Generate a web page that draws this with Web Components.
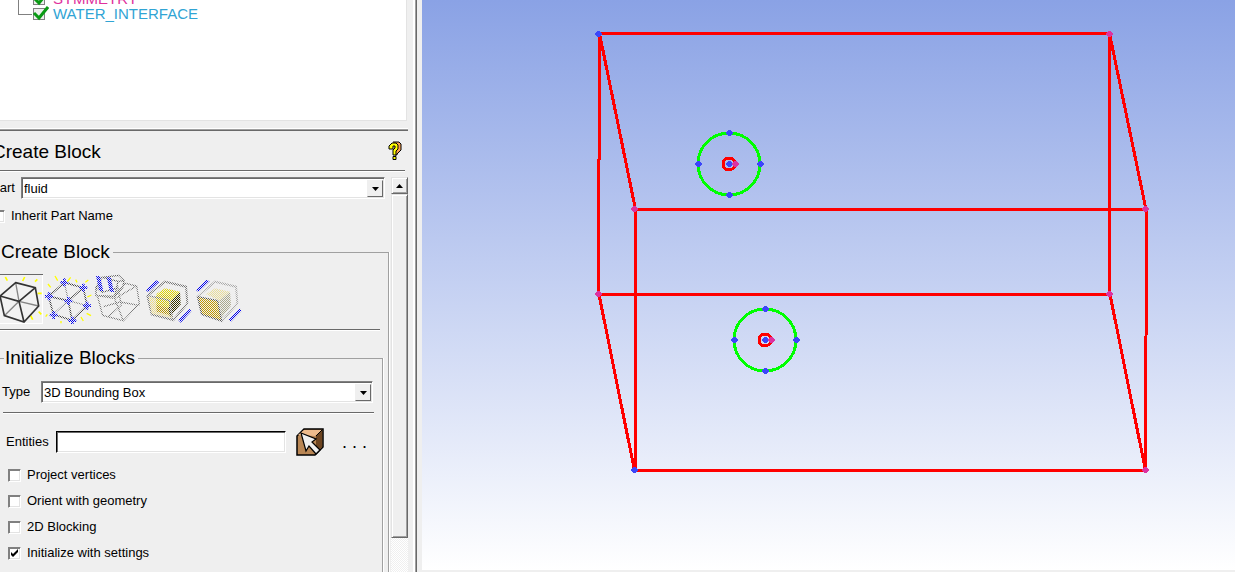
<!DOCTYPE html>
<html lang="en">
<head>
<meta charset="utf-8">
<title>Blocking</title>
<style>
html, body { margin: 0; height: 100%; }
body { background: #efefef; color: #000; font: 13px/16px "Liberation Sans", Arial, sans-serif; overflow: hidden; }
</style>
</head>
<body>
<blocking-app></blocking-app>
<script>
const define = (name, html, setup) => customElements.define(name, class extends HTMLElement {
  constructor() {
    super();
    const t = document.createElement('template');
    t.innerHTML = html;
    this.attachShadow({ mode: 'open' }).append(t.content.cloneNode(true));
  }
  connectedCallback() { if (setup) setup.call(this, this.shadowRoot); }
});

define('tree-item', `
<style>
:host { display: flex; height: 15px; align-items: center; font-size: 15px; line-height: 15px; color: var(--tint); white-space: nowrap; }
.branch { width: 14px; height: 15px; margin-left: 18px; flex: none; border-left: 1px solid #808080; box-sizing: border-box; background: linear-gradient(#808080, #808080) 0 8px / 14px 1px no-repeat; }
:host([last]) .branch { height: 9px; align-self: flex-start; }
label { display: flex; align-items: center; gap: 4px; }
.tick { display: grid; width: 17px; height: 15px; }
.tick > * { grid-area: 1 / 1; }
input { appearance: none; margin: 2px 0 0 1px; width: 12px; height: 12px; box-sizing: border-box; border: 1px solid #808080; background: #efefef; }
svg { pointer-events: none; }
input:not(:checked) + svg { visibility: hidden; }
</style>
<span class="branch"></span>
<label><span class="tick"><input type="checkbox" checked><svg width="17" height="15"><path d="M2 7l5 5 9-11" fill="none" stroke="#0a9a14" stroke-width="3"/></svg></span><slot></slot></label>`);

define('part-tree', `
<style>
:host { display: block; box-sizing: border-box; height: 121px; overflow: hidden; background: #fff; border-right: 1px solid #e3e3e3; border-bottom: 1px solid #e3e3e3; }
.rows { margin-top: -9px; }
</style>
<div class="rows"><slot></slot></div>`);

define('rule-line', `
<style>:host { display: block; height: 1px; background: #696969; border-bottom: 1px solid #fff; }</style>`);

define('help-button', `
<style>
:host { display: block; }
button { display: block; border: 0; padding: 0; background: none; }
svg { display: block; }
</style>
<button type="button" aria-label="Help"><svg width="14" height="20" viewBox="0 0 14 20">
<path d="M5 1h6l2 2v6l-4 4v1H7" fill="#f9a050" stroke="#000"/>
<path d="M2 4l2-2h4l2 2v4L8 10v4H5v-5l2-2V5H5v3H1V5z" fill="#ff0" stroke="#000"/>
<path d="M5 15.500h3v3H5z" fill="#ff0" stroke="#000"/></svg></button>`);

define('drop-down', `
<style>
:host { display: flex; align-items: center; }
label { flex: none; width: var(--label, 30px); }
.box { flex: 1; display: grid; grid-template-columns: 1fr 16px; box-sizing: border-box; height: 22px; border: 1px solid #a0a0a0; border-color: #808080 #fff #fff #808080; box-shadow: inset 1px 1px #696969, inset -1px -1px #e3e3e3; background: #fff; padding: 2px 1px 1px 2px; }
select { grid-area: 1 / 1 / 2 / 3; appearance: none; border: 0; outline: 0; margin: 0; padding: 0; background: none; color: inherit; font: inherit; }
.arrow { grid-area: 1 / 2; pointer-events: none; display: grid; place-items: center; background: #efefef; border: 1px solid; border-color: #efefef #696969 #696969 #efefef; }
</style>
<label for="s"></label>
<span class="box"><select id="s"><option></option></select><span class="arrow"><svg width="7" height="4"><path d="M0 0h7L3.500 4z"/></svg></span></span>`,
function (r) {
  r.querySelector('label').textContent = this.getAttribute('label');
  r.querySelector('option').textContent = this.getAttribute('value');
});

define('check-row', `
<style>
:host { display: block; height: 26px; }
label { display: flex; align-items: center; gap: 6px; height: 26px; white-space: nowrap; }
.tick { display: grid; width: 13px; height: 13px; }
.tick > * { grid-area: 1 / 1; }
input { appearance: none; margin: 0; width: 13px; height: 13px; box-sizing: border-box; background: #fff; border: 1px solid; border-color: #808080 #fff #fff #808080; box-shadow: inset 1px 1px #808080, inset -1px -1px #e3e3e3; }
svg { pointer-events: none; }
input:not(:checked) + svg { visibility: hidden; }
</style>
<label><span class="tick"><input type="checkbox"><svg width="13" height="13"><path d="M3 5v3l2 2 5-5V2L5 7z"/></svg></span><slot></slot></label>`,
function (r) { r.querySelector('input').checked = this.hasAttribute('checked'); });

define('group-box', `
<style>
:host { display: block; }
fieldset { margin: 0; min-width: 0; box-sizing: border-box; border: 1px solid #a0a0a0; box-shadow: 1px 0 #fff; padding: 0 8px 0 12px; min-height: var(--min, 400px); }
legend { padding: 0 3px 0 1px; margin-left: var(--legend, 0px); font-size: 19px; line-height: 24px; }
</style>
<fieldset><legend></legend><slot></slot></fieldset>`,
function (r) { r.querySelector('legend').textContent = this.getAttribute('label'); });

/* Stippled icons: solid shapes under a checkerboard of the panel colour. */
const stipple = x => `<defs><pattern id="s" width="6" height="6" patternUnits="userSpaceOnUse"><path d="M0 0h3v3H0zM3 3h3v3H3z" fill="#efefef"/></pattern></defs><rect x="${x}" y="27" width="150" height="150" fill="url(#s)"/>`;
const art = {
  box: ['Initialize blocks', -21, `<g fill="none"><path d="M22 47l-6-11M68 48l6-12M105 50l7-7M113 85h12M116 140l8 8M92 152l6 12" stroke="#ff0" stroke-width="5"/>
<path d="M57 109L47 53M57 109L13 152M57 109l59 14" stroke="#858585" stroke-width="4"/>
<path d="M47 53l59 15 10 55-44 48-59-19L0 93zM57 109l49-41M57 109L0 93M57 109l15 62" stroke="#333" stroke-width="5"/></g>`, ''],
  vertices: ['From vertices', 132, `<g fill="none"><path d="M193 53l57 15 11 54-45 44-56-18-14-54zM205 107l45-39M205 107l-59-13M205 107l11 59" stroke="#444" stroke-width="5"/><path d="M205 107l-12-54M205 107l-45 41M205 107l56 15" stroke="#888" stroke-width="4"/></g>
<g fill="#00e">${[[193,52],[250,68],[261,122],[217,167],[161,150],[147,94],[205,108]].map(([x,y])=>`<path d="M${x-12} ${y-4}h8v-8h8v8h8v8h-8v8h-8v-8h-8z"/>`).join('')}</g>`,
`<path d="M173 47l-8-14M202 50l10-13M231 52l-4-8M256 52l9-7M144 57l8 10M262 96l12-6M260 145l13 7M243 156l7 12M142 148l-5 7M183 168v7" fill="none" stroke="#ff0" stroke-width="4"/>`],
  extrude: ['Extrude', 282, `<g fill="none" stroke="#555" stroke-width="4"><path d="M288 67l18-30 50-6 16 16-4 20-24 27-56-2zM306 37l48 12 18-2M354 49l-10 45M288 67l18 15 42-12"/><path d="M340 96l36-41 34 8 8 52-48 52-62-16-16-60M292 91l52 10 66-38M344 101l26 66M310 125l50-14 58 10M352 60l12 60-40 36" stroke="#777"/></g>
<path d="M288 33h12l10 45h-12zM320 37h12l10 44h-12z" fill="#00e"/>`, ''],
  scan: ['3D from 2D', 42, `<path d="M52 92l53-42 63 15 4 50-42 50-65-17z" fill="none" stroke="#777" stroke-width="6"/>
<path d="M56 95l65 10 8 55-64-14z" fill="#e8d88c"/><path d="M78 88l27-18 45 10-25 27z" fill="#e0d400"/><path d="M78 90h44v45H80z" fill="#d4c400"/><path d="M80 120l40 10-2 20-38-10z" fill="#b89400"/><path d="M125 105l25-25 2 38-32 38-5-25z" fill="#353000"/>
<path d="M54 92l64 14 10 56" fill="none" stroke="#777" stroke-width="4"/>
<path d="M48 76l30-30 10 5-33 31zM145 165l34-34 5 8-32 34z" fill="#00e"/>`, ''],
  face: ['2D from 3D', 192, `<path d="M203 95l52-45 63 15 4 50-46 53-61-20z" fill="none" stroke="#aaa" stroke-width="6"/>
<path d="M228 88l27-18 45 10-30 28z" fill="#e8dc98"/><path d="M268 108l32-28 3 42-28 36z" fill="#aaa88c"/>
<path d="M203 95l60 12 12 61-60-20z" fill="#c09800" stroke="#555" stroke-width="4"/>
<path d="M198 75l30-31 11 5-34 32zM296 164l33-34 6 7-33 34z" fill="#00e"/>`, '']
};
define('block-tool', `
<style>
:host { display: block; }
button { display: block; box-sizing: border-box; width: 50px; height: 50px; padding: 0; border: 0; background: none; }
:host([active]) button { box-shadow: inset 0 1px #696969, inset -1px -1px #fff; background: #f2f2f2; }
svg { display: block; }
</style><button type="button"></button>`,
function (r) {
  const [name, x, body, over] = art[this.getAttribute('icon')];
  const b = r.querySelector('button');
  b.setAttribute('aria-label', name);
  b.innerHTML = `<svg width="50" height="50" viewBox="${x} 27 150 150">${body}${this.hasAttribute('active') ? '' : stipple(x)}${over}</svg>`;
});

define('entity-picker', `
<style>
:host { display: flex; align-items: center; height: 28px; }
label { width: 50px; flex: none; }
input { flex: 1; min-width: 0; box-sizing: border-box; height: 22px; margin: 0; border: 1px solid; border-color: #000 #fff #fff #000; box-shadow: inset 1px 1px #696969, inset -1px -1px #e3e3e3; outline: 0; background: #fff; font: inherit; padding: 2px; }
button { flex: none; border: 0; padding: 0; background: none; font: inherit; }
.pick { margin-left: 10px; }
.more { width: 50px; height: 28px; padding-left: 18px; text-align: left; font-size: 18px; }
svg { display: block; }
</style>
<label for="e">Entities</label><input id="e" type="text">
<button class="pick" type="button" aria-label="Select entities"><svg width="28" height="28" viewBox="0 0 28 28">
<path d="M1 8l7-7h19v18l-8 8H1z" fill="#b98654" stroke="#000" stroke-width="1.500"/>
<path d="M2 7l6-5h18l-7 6z" fill="#eebb8c"/><path d="M20 8l6-6v17l-6 7z" fill="#6d4420"/><path d="M20 8l6-6" stroke="#000"/>
<path d="M5 5l15 6-4 3 8 8-4 4-7-8-3 5z" fill="#efefef" stroke="#000" stroke-width="1.200"/></svg></button>
<button class="more" type="button" aria-label="More options">. . .</button>`);

define('scroll-bar', `
<style>
:host { display: flex; flex-direction: column; width: 17px; background: repeating-conic-gradient(#fff 0 25%, #efefef 0 50%) 0 0 / 2px 2px; }
button { flex: none; padding: 0; box-sizing: border-box; width: 17px; height: 17px; border: 1px solid; border-color: #e3e3e3 #696969 #696969 #e3e3e3; box-shadow: inset 1px 1px #fff, inset -1px -1px #a0a0a0; background: #efefef; display: grid; place-items: center; }
.thumb { height: 344px; }
</style>
<button type="button" aria-label="Scroll up"><svg width="7" height="4"><path d="M0 4h7L3.500 0z"/></svg></button>
<button class="thumb" type="button" aria-label="Scroll position"></button>`);

define('block-form', `
<style>
:host { display: grid; grid-template-columns: 1fr 17px; column-gap: 2px; overflow: hidden; }
.body { min-width: 0; }
.part { margin: 0 4px 0 -9px; }
.inherit { margin: 4px 0 0 -8px; }
.outer { margin: 11px 0 0 -13px; --min: 500px; }
.tools { display: flex; margin: 10px 0 5px -7px; }
.tools block-tool:first-child { margin-right: 1px; }
.inner { margin: 15px -3px 0 -12px; --legend: 3px; }
.type { margin: 11px 1px 9px 1px; --label: 39px; }
.inner rule-line { margin: 0 0 14px 2px; }
.settings { margin: 0 0 0 5px; }
.checks { margin: 6px 0 0 7px; }
</style>
<div class="body">
  <drop-down class="part" label="Part" value="fluid"></drop-down>
  <check-row class="inherit">Inherit Part Name</check-row>
  <group-box class="outer" label="Create Block">
    <div class="tools"><block-tool icon="box" active></block-tool><block-tool icon="vertices"></block-tool><block-tool icon="extrude"></block-tool><block-tool icon="scan"></block-tool><block-tool icon="face"></block-tool></div>
    <rule-line></rule-line>
    <group-box class="inner" label="Initialize Blocks">
      <drop-down class="type" label="Type" value="3D Bounding Box"></drop-down>
      <rule-line></rule-line>
      <entity-picker class="settings"></entity-picker>
      <div class="checks">
        <check-row>Project vertices</check-row>
        <check-row>Orient with geometry</check-row>
        <check-row>2D Blocking</check-row>
        <check-row checked>Initialize with settings</check-row>
      </div>
    </group-box>
  </group-box>
</div>
<scroll-bar></scroll-bar>`);

define('side-panel', `
<style>
:host { display: flex; flex-direction: column; overflow: hidden; box-sizing: border-box; padding-right: 5px; border-right: 1px solid #696969; box-shadow: inset -1px 0 #a0a0a0, inset -3px 0 #fff; }
part-tree { flex: none; margin-right: 4px; }
.edge { flex: none; height: 2px; margin: 7px 3px 0 0; border-top: 1px solid #fff; background: linear-gradient(#a0a0a0 50%, #696969 50%); }
header { flex: none; display: flex; justify-content: space-between; align-items: center; height: 39px; padding-right: 9px; }
h1 { margin: 3px 0 0 -8px; font: inherit; font-size: 19px; line-height: 24px; }
rule-line { flex: none; margin-right: 6px; }
block-form { flex: 1; min-height: 0; margin: 5px 3px 0 0; }
</style>
<part-tree>
  <tree-item style="--tint:#e0309c">SYMMETRY</tree-item>
  <tree-item last style="--tint:#30a4d4">WATER_INTERFACE</tree-item>
</part-tree>
<div class="edge"></div>
<header><h1>Create Block</h1><help-button></help-button></header>
<rule-line></rule-line>
<block-form></block-form>`);

const dot = (x, y, c) => `<path d="M${x-4} ${y-1}h1v-1h1v-1h3v1h1v1h1v2h-1v1h-1v1h-3v-1h-1v-1h-1z" fill="${c}"/>`;
const port = (x, y) => `<circle cx="${x-1}" cy="${y}" r="31" stroke="#0f0" stroke-width="3"/><circle cx="${x-1}" cy="${y}" r="6" stroke="#f00"/>`
  + [[0,-31],[0,31],[-31,0],[31,0],[0,0]].map(([a,b]) => dot(x+a, y+b, '#3c46fa')).join('') + dot(x+6, y, '#dc32a0');
define('geometry-view', `
<style>
:host { display: block; min-width: 0; min-height: 0; background: linear-gradient(#8aa2e5, #fff); }
svg { display: block; width: 100%; height: 100%; }
</style>
<svg viewBox="422 0 813 570" preserveAspectRatio="xMinYMin meet" role="img" aria-label="Wireframe box with two ports" shape-rendering="crispEdges">
<g fill="none" stroke-width="3">
<path stroke="#f00" d="M599.500 33.500H1109.500V294.500H598.500zM635.500 209.500H1146.500L1145.500 470.500H635.500zM599.500 33.500L635.500 209.500M1109.500 33.500L1146 209.500M599 294.500L634.500 470.500M1110 294.500L1145.500 470.500"/>
${port(730,164)}${port(766,340)}
</g>
${dot(599,34,'#3c46fa')}${dot(635,470,'#3c46fa')}${[[1110,34],[1146,209],[635,209],[599,294],[1110,294],[1146,470]].map(([x,y])=>dot(x,y,'#dc32a0')).join('')}
</svg>`);

define('blocking-app', `
<style>
:host { display: grid; grid-template-columns: 417px minmax(0, 1fr); column-gap: 5px; height: 100vh; background: #efefef; }
side-panel { min-height: 0; }
geometry-view { margin-bottom: 2px; }
</style>
<side-panel></side-panel>
<geometry-view></geometry-view>`);
</script>
</body>
</html>
